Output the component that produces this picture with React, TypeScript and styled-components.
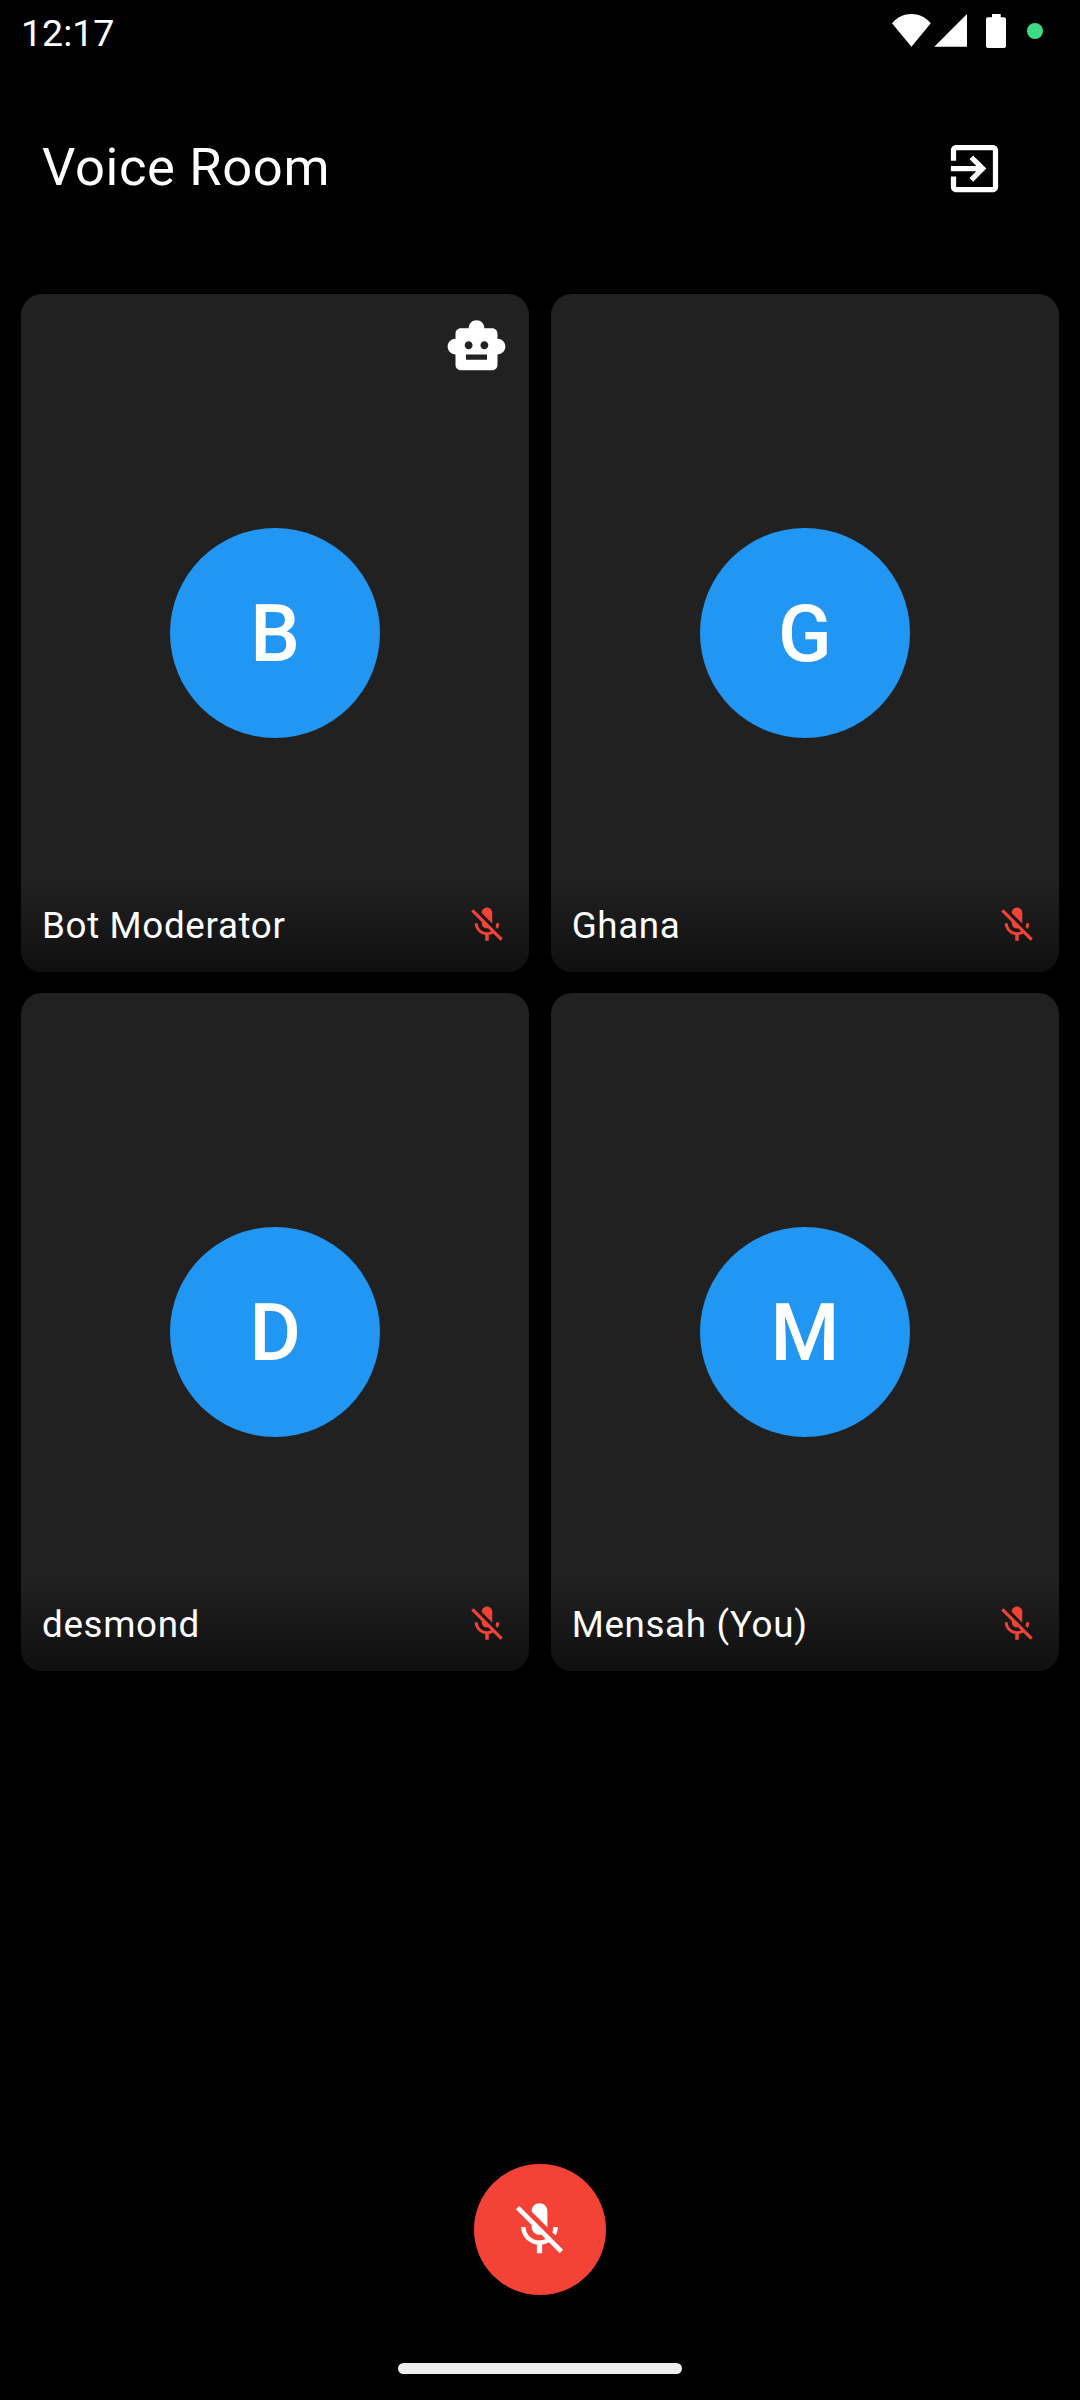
import React from "react";
import styled, { createGlobalStyle } from "styled-components";

const GlobalStyle = createGlobalStyle`
  * { box-sizing: border-box; }
  body { margin: 0; background: #000; }
`;

const Screen = styled.main`
  display: flex;
  flex-direction: column;
  width: 1080px;
  height: 2400px;
  overflow: hidden;
  background: #000;
  color: #fff;
  font-family: Roboto, "Noto Sans", sans-serif;
`;

const StatusBar = styled.header`
  display: flex;
  justify-content: space-between;
  height: 94px;
  padding: 11px 37px 0 21px;
`;

const Clock = styled.time`
  font-size: 37.5px;
  line-height: 44px;
`;

const StatusIcons = styled.div`
  display: flex;
  align-items: flex-start;
  padding-top: 3px;
`;

const PrivacyDot = styled.span`
  width: 16px;
  height: 16px;
  margin: 9px 0 0 21px;
  border-radius: 50%;
  background: #3ddc84;
`;

const AppBar = styled.header`
  display: flex;
  align-items: center;
  justify-content: space-between;
  height: 147px;
  padding: 0 74px 0 42px;
`;

const Title = styled.h1`
  margin: 0;
  font-size: 52.5px;
  font-weight: 400;
  line-height: 63px;
  letter-spacing: 0.656px;
`;

const IconButton = styled.button`
  display: flex;
  padding: 2px 0 0;
  border: 0;
  background: none;
  color: #fff;
`;

const Glyph = styled.svg<{ $size: number }>`
  display: block;
  flex: none;
  width: ${(p) => p.$size}px;
  height: ${(p) => p.$size}px;
  fill: currentColor;
`;

const Grid = styled.section`
  display: grid;
  grid-template-columns: 1fr 1fr;
  grid-auto-rows: 678px;
  gap: 21px 21.3px;
  margin-top: 53px;
  padding: 0 21px;
`;

const Tile = styled.article`
  display: grid;
  grid-template-rows: 94.5px 1fr 94.5px;
  overflow: hidden;
  border-radius: 21px;
  background: #212121;
`;

const TileTop = styled.div`
  display: flex;
  justify-content: flex-end;
  padding: 21px;
`;

const Avatar = styled.div`
  display: flex;
  align-items: center;
  justify-content: center;
  place-self: center;
  width: 210px;
  height: 210px;
  padding-top: 2px;
  border-radius: 50%;
  background: #2196f3;
  font-size: 78.75px;
  font-weight: 500;
  line-height: 92px;
`;

const TileFooter = styled.footer`
  display: flex;
  align-items: center;
  justify-content: space-between;
  padding: 21px;
  background: linear-gradient(to bottom, rgba(0, 0, 0, 0), rgba(0, 0, 0, 0.54));
  color: #f44336;
`;

const Name = styled.span`
  padding-top: 2px;
  color: #fff;
  font-size: 36.75px;
  line-height: 50.5px;
  letter-spacing: 0.656px;
`;

const Controls = styled.div`
  display: flex;
  justify-content: center;
  margin-top: auto;
  padding-bottom: 68px;
`;

const MuteButton = styled.button`
  display: flex;
  align-items: center;
  justify-content: center;
  width: 131.25px;
  height: 131.25px;
  padding: 0 1px 0 0;
  border: 0;
  border-radius: 50%;
  background: #f44336;
  color: #fff;
`;

const HomeHandle = styled.div`
  align-self: center;
  width: 284px;
  height: 11px;
  margin-bottom: 26px;
  border-radius: 6px;
  background: #ececec;
`;

const paths = {
  exit: "M10.09 15.59L11.5 17l5-5-5-5-1.41 1.41L12.67 11H3v2h9.67l-2.58 2.59zM19 3H5c-1.11 0-2 .9-2 2v4h2V5h14v14H5v-4H3v4c0 1.1.89 2 2 2h14c1.1 0 2-.9 2-2V5c0-1.1-.9-2-2-2z",
  robot:
    "M20 9V7c0-1.1-.9-2-2-2h-3c0-1.66-1.34-3-3-3S9 3.34 9 5H6c-1.1 0-2 .9-2 2v2c-1.66 0-3 1.34-3 3s1.34 3 3 3v4c0 1.1.9 2 2 2h12c1.1 0 2-.9 2-2v-4c1.66 0 3-1.34 3-3s-1.34-3-3-3zM7.5 11.5c0-.83.67-1.5 1.5-1.5s1.5.67 1.5 1.5S9.83 13 9 13s-1.5-.67-1.5-1.5zM16 17H8v-2h8v2zm-1-4c-.83 0-1.5-.67-1.5-1.5S14.17 10 15 10s1.5.67 1.5 1.5S15.83 13 15 13z",
  micOff:
    "M19 11h-1.7c0 .74-.16 1.43-.43 2.05l1.23 1.23c.56-.98.9-2.09.9-3.28zm-4.02.17c0-.06.02-.11.02-.17V5c0-1.66-1.34-3-3-3S9 3.34 9 5v.18l5.98 5.99zM4.27 3L3 4.27l6.01 6.01V11c0 1.66 1.33 3 2.99 3 .22 0 .44-.03.65-.08l1.66 1.66c-.71.33-1.5.52-2.31.52-2.76 0-5.3-2.1-5.3-5.1H5c0 3.41 2.72 6.23 6 6.72V21h2v-3.28c.91-.13 1.77-.45 2.54-.9L19.73 21 21 19.73 4.27 3z",
};

function Icon({ name, size }: { name: keyof typeof paths; size: number }) {
  return (
    <Glyph $size={size} viewBox="0 0 24 24" aria-hidden="true">
      <path d={paths[name]} />
    </Glyph>
  );
}

const participants = [
  { name: "Bot Moderator", initial: "B", bot: true },
  { name: "Ghana", initial: "G", bot: false },
  { name: "desmond", initial: "D", bot: false },
  { name: "Mensah (You)", initial: "M", bot: false },
];

export default function App() {
  return (
    <>
      <GlobalStyle />
      <Screen>
        <StatusBar>
          <Clock>12:17</Clock>
          <StatusIcons>
            <svg width="114" height="34" viewBox="0 0 114 34" fill="#fff" aria-hidden="true">
              <path d="M0 9.2C5.4 3 12 0 19.4 0S33.400 3 38.800 9.200L19.400 32.800Z" />
              <path d="M42.300 32.800L75 0V32.800Z" />
              <path d="M100 0h8.700v3.200h3.300a2 2 0 0 1 2 2V32a2 2 0 0 1-2 2H96a2 2 0 0 1-2-2V5.200a2 2 0 0 1 2-2h4Z" />
            </svg>
            <PrivacyDot />
          </StatusIcons>
        </StatusBar>
        <AppBar>
          <Title>Voice Room</Title>
          <IconButton aria-label="Leave room">
            <Icon name="exit" size={63} />
          </IconButton>
        </AppBar>
        <Grid>
          {participants.map((p) => (
            <Tile key={p.name}>
              <TileTop>{p.bot && <Icon name="robot" size={63} />}</TileTop>
              <Avatar>{p.initial}</Avatar>
              <TileFooter>
                <Name>{p.name}</Name>
                <Icon name="micOff" size={42} />
              </TileFooter>
            </Tile>
          ))}
        </Grid>
        <Controls>
          <MuteButton aria-label="Unmute">
            <Icon name="micOff" size={63} />
          </MuteButton>
        </Controls>
        <HomeHandle />
      </Screen>
    </>
  );
}
